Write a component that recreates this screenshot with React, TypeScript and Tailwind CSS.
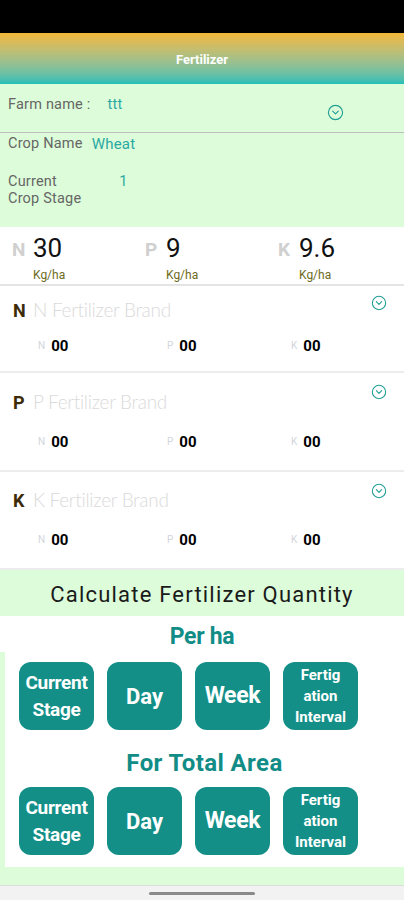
import { CircleChevronDown } from 'lucide-react'

const brands = ['N', 'P', 'K']

function NutrientRow() {
  return (
    <div className="flex text-[15px]">
      {['N', 'P', 'K'].map((n, i) => (
        <div key={n} className={`flex items-center ${i === 0 ? 'w-[129px] pl-[38px]' : i === 1 ? 'w-[124px] pl-[38px]' : 'pl-[38px]'}`}>
          <span className="text-[10px] text-gray-300 mr-[6px]">{n}</span>
          <span className="font-bold text-black">00</span>
        </div>
      ))}
    </div>
  )
}

function ActionButtons() {
  return (
    <div className="flex gap-[13px] pl-[14px]">
      <div className="w-[75px] h-[68px] rounded-[12px] bg-[#138f88] text-white font-bold text-[19px] leading-[27px] flex flex-col items-center justify-center tracking-[-0.3px]">
        <span>Current</span>
        <span>Stage</span>
      </div>
      <div className="w-[75px] h-[68px] rounded-[12px] bg-[#138f88] text-white font-bold text-[22px] flex items-center justify-center">
        Day
      </div>
      <div className="w-[75px] h-[68px] rounded-[12px] bg-[#138f88] text-white font-bold text-[23px] flex items-center justify-center tracking-[-0.3px]">
        Week
      </div>
      <div className="w-[75px] h-[68px] rounded-[12px] bg-[#138f88] text-white font-bold text-[15px] leading-[21px] flex flex-col items-center justify-center">
        <span>Fertig</span>
        <span>ation</span>
        <span>Interval</span>
      </div>
    </div>
  )
}

export default function App() {
  return (
    <div className="w-[404px] h-[900px] bg-white overflow-hidden flex flex-col font-['Roboto',sans-serif]">
      <div className="h-[33px] bg-black shrink-0" />

      <header className="h-[51px] shrink-0 bg-gradient-to-b from-[#f3b834] to-[#1dbfb8] flex items-center justify-center pt-[3px]">
        <h1 className="text-white font-bold text-[13px]">Fertilizer</h1>
      </header>

      <section className="h-[143px] shrink-0 bg-[#ddfcd9] text-[14.5px] text-[#666] tracking-[0.2px]">
        <div className="h-[49px] border-b border-[#bdbdbd] flex pl-[8px] pr-[60px] pt-[10px] relative">
          <span>Farm name :</span>
          <span className="ml-[17px] text-[#2aa9a3]">ttt</span>
          <CircleChevronDown className="absolute right-[60px] top-[20px] text-[#1f9e95]" size={17} strokeWidth={1.6} />
        </div>
        <div className="flex items-center pl-[8px] pt-[2px] h-[20px]">
          <span>Crop Name</span>
          <span className="ml-[9px] text-[#2aa9a3] text-[15px]">Wheat</span>
        </div>
        <div className="flex pl-[8px] pt-[20px] leading-[17px]">
          <div>
            <div>Current</div>
            <div>Crop Stage</div>
          </div>
          <span className="ml-[38px] text-[#2aa9a3]">1</span>
        </div>
      </section>

      <section className="h-[59px] shrink-0 border-b-2 border-[#e4e4e4] flex pt-[6px]">
        {[
          ['N', '30', 'w-[133px]'],
          ['P', '9', 'w-[133px]'],
          ['K', '9.6', ''],
        ].map(([l, v, w]) => (
          <div key={l} className={`${w} pl-[12px] flex`}>
            <span className="text-[#d0d0d0] font-bold text-[19px] mt-[3px] w-[21px]">{l}</span>
            <div className="flex flex-col">
              <span className="text-[26px] leading-[30px] text-[#111]">{v}</span>
              <span className="text-[12px] text-[#6e6b22] mt-[3px]">Kg/ha</span>
            </div>
          </div>
        ))}
      </section>

      {brands.map((b, i) => (
        <section
          key={b}
          className={`shrink-0 border-b-2 border-[#ececec] relative ${i === 0 ? 'h-[87px] pt-[10px]' : i === 1 ? 'h-[99px] pt-[15px]' : 'h-[98px] pt-[14px]'}`}
        >
          <div className="flex items-center pl-[13px]">
            <span className="text-[#3d2a08] font-bold text-[18px] w-[20px]">{b}</span>
            <span className="font-['Lato',sans-serif] font-light text-[19px] text-[#dadada] tracking-[-0.3px]">
              {b} Fertilizer Brand
            </span>
          </div>
          <CircleChevronDown
            className={`absolute right-[17px] text-[#1f9e95] ${i === 0 ? 'top-[9px]' : 'top-[11px]'}`}
            size={16}
            strokeWidth={1.6}
          />
          <div className={i === 0 ? 'mt-[10px]' : 'mt-[14px]'}>
            <NutrientRow />
          </div>
        </section>
      ))}

      <div className="h-[46px] shrink-0 bg-[#ddfcd9] flex items-center justify-center pt-[3px]">
        <span className="text-[22px] text-[#1a1a1a] tracking-[1.2px]">Calculate Fertilizer Quantity</span>
      </div>

      <div className="flex-1 bg-[#ddfcd9] flex flex-col">
        <div className="h-[36px] bg-white flex items-end justify-center">
          <span className="text-[#128c86] font-bold text-[23px] tracking-[-0.3px] leading-[30px]">Per ha</span>
        </div>
        <div className="ml-[5px] bg-white pt-[10px] pb-[12px]">
          <ActionButtons />
          <div className="h-[57px] flex items-center justify-center pt-[8px]">
            <span className="text-[#128c86] font-bold text-[24px] tracking-[0.4px]">For Total Area</span>
          </div>
          <ActionButtons />
        </div>
      </div>

      <div className="h-[15px] shrink-0 bg-[#f2f2f2] border-t border-[#ddd] flex items-center justify-center">
        <div className="w-[106px] h-[3px] rounded-full bg-[#8a8a8a]" />
      </div>
    </div>
  )
}
